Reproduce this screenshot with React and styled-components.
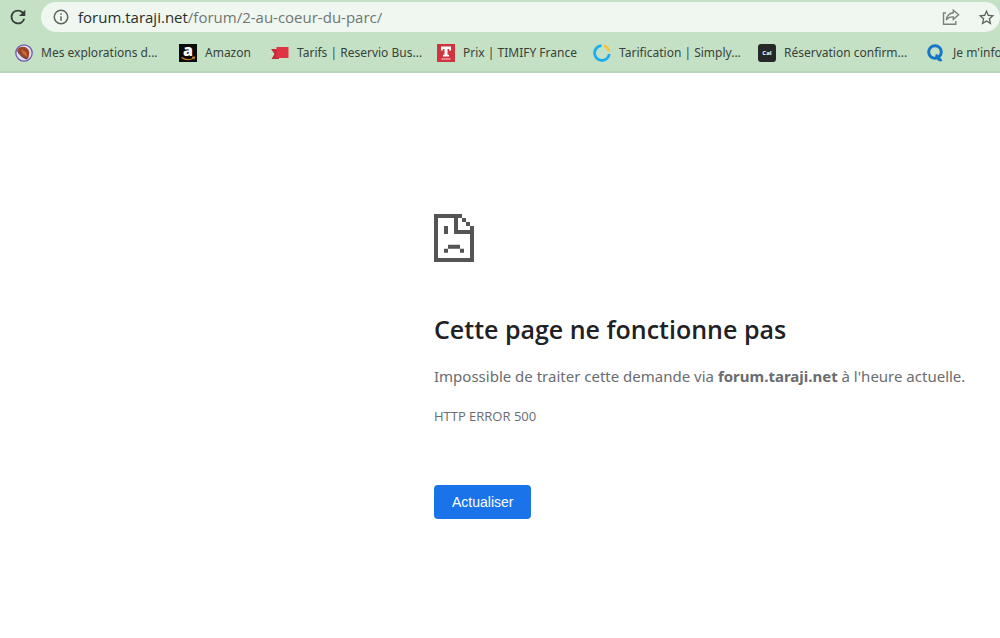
import React from "react";
import styled, { createGlobalStyle } from "styled-components";

const GlobalStyle = createGlobalStyle`
  * {
    box-sizing: border-box;
  }
  body {
    margin: 0;
    background-color: #ffffff;
    font-family: "Noto Sans", "Open Sans", sans-serif;
    overflow-x: hidden;
  }
`;

const Browser = styled.header`
  background-color: #c5e1c5;
  border-bottom: 2px solid #b9d3b9;
  overflow: hidden;
`;

const Toolbar = styled.div`
  display: flex;
  align-items: center;
  padding-top: 2px;
`;

const IconButton = styled.button`
  display: flex;
  align-items: center;
  justify-content: center;
  flex: none;
  width: ${(props) => props.$width}px;
  height: 30px;
  padding: 0;
  border: none;
  background: none;
  color: ${(props) => props.$color};
  cursor: pointer;
`;

const AddressBar = styled.div`
  flex: 1;
  display: flex;
  align-items: center;
  height: 30px;
  margin-left: 6px;
  padding-left: 4px;
  border-radius: 15px;
  background-color: #f0f7f0;
`;

const Url = styled.div`
  flex: 1;
  padding-left: 1px;
  font-family: "Open Sans", "Noto Sans", sans-serif;
  font-size: 15px;
  line-height: 30px;
  color: #6f7670;
  white-space: nowrap;
`;

const Host = styled.span`
  color: #26302a;
`;

const Bookmarks = styled.nav`
  display: flex;
  gap: 18px;
  height: 39px;
  padding: 2px 0 0 15px;
`;

const Bookmark = styled.a`
  flex: none;
  display: flex;
  align-items: center;
  gap: 8px;
  font-size: 12px;
  color: #37423a;
  text-decoration: none;
  white-space: nowrap;

  svg {
    flex: none;
  }
`;

const Label = styled.span`
  width: ${(props) => props.$width}px;
`;

const ErrorPage = styled.main`
  padding: 141px 0 0 434px;
  color: #6a6c70;
`;

const SadPage = styled.div`
  display: flex;
`;

const Title = styled.h1`
  margin: 49px 0 0;
  font-family: "Open Sans", "Noto Sans", sans-serif;
  font-size: 25px;
  font-weight: 600;
  line-height: 36px;
  color: #202124;
  white-space: nowrap;
`;

const Message = styled.p`
  margin: 16px 0 0;
  font-size: 15px;
  line-height: 26px;
  white-space: nowrap;
`;

const ErrorCode = styled.p`
  margin: 17px 0 0;
  font-family: "Open Sans", "Noto Sans", sans-serif;
  font-size: 13px;
  line-height: 20px;
`;

const Reload = styled.button`
  margin-top: 59px;
  height: 34px;
  padding: 0 18px;
  border: none;
  border-radius: 4px;
  background-color: #1a73e8;
  color: #ffffff;
  font-family: "Liberation Sans", Arial, sans-serif;
  font-size: 14px;
  cursor: pointer;
`;

const ReloadIcon = () => (
  <svg width="22" height="22" viewBox="0 0 24 24" fill="currentColor">
    <path d="M17.65 6.35A7.96 7.96 0 0 0 12 4a8 8 0 1 0 7.73 10h-2.08A6 6 0 1 1 12 6c1.66 0 3.14.69 4.22 1.78L13 11h7V4z" />
  </svg>
);

const InfoIcon = () => (
  <svg width="18" height="18" viewBox="0 0 24 24" fill="currentColor">
    <path d="M11 7h2v2h-2zm0 4h2v6h-2zm1-9a10 10 0 1 0 0 20 10 10 0 0 0 0-20zm0 18a8 8 0 1 1 0-16 8 8 0 0 1 0 16z" />
  </svg>
);

const ShareIcon = () => (
  <svg
    width="18"
    height="18"
    viewBox="0 0 18 18"
    fill="none"
    stroke="currentColor"
    strokeWidth="1.4"
  >
    <path d="M4 5H1.500v11.200h12.300V13" />
    <path d="M11.300 2.200L16.600 6.800l-5.300 4.600V8.900C8 8.700 5.800 9.800 4.300 12c.4-3.700 2.700-6.700 7-7.300z" />
  </svg>
);

const StarIcon = () => (
  <svg width="19" height="19" viewBox="0 0 24 24" fill="currentColor">
    <path d="M22 9.240l-7.190-.62L12 2 9.190 8.630 2 9.240l5.460 4.730L5.820 21 12 17.270 18.180 21l-1.630-7.030zM12 15.400l-3.760 2.270 1-4.280-3.320-2.880 4.380-.38L12 6.100l1.710 4.040 4.380.38-3.320 2.880 1 4.280z" />
  </svg>
);

const ExplorationsIcon = () => (
  <svg width="18" height="18" viewBox="0 0 18 18">
    <circle cx="9" cy="9" r="8.2" fill="#e3dcec" stroke="#6b5bb0" strokeWidth="1.3" />
    <path d="M2.500 5.500C4 2.800 7.500 2.200 10.500 3.300c2.500 1.200 4 3.700 3.700 6.200l-1 5.200C9.500 14.800 4.500 11.500 2.500 5.500z" fill="#9b4322" />
    <path d="M6 5l5 3 1.500 5C9 11.500 6.500 9 6 5z" fill="#c9692f" />
    <path d="M2.500 6.500c1.500 4 5 7.500 9.500 8.500" stroke="#4a2430" fill="none" />
  </svg>
);

const AmazonIcon = () => (
  <svg width="18" height="18" viewBox="0 0 18 18">
    <rect width="18" height="18" fill="#0b0b0b" />
    <text
      x="9"
      y="12"
      textAnchor="middle"
      fontFamily="Open Sans, sans-serif"
      fontSize="16"
      fontWeight="800"
      fill="#ffffff"
    >
      a
    </text>
    <path d="M2.500 13.500c4 2.700 8.500 2.700 12 .6M13 13.300l2.500-.2-.6 2.300" stroke="#d8892a" strokeWidth="1.1" fill="none" />
  </svg>
);

const ReservioIcon = () => (
  <svg width="18" height="18" viewBox="0 0 18 18">
    <path d="M0 5h8v10H0.500l3-5z" fill="#c42c3b" />
    <path d="M5.500 3H17.500v11H5.500z" fill="#e03445" />
  </svg>
);

const TimifyIcon = () => (
  <svg width="18" height="18" viewBox="0 0 18 18">
    <rect width="18" height="18" fill="#cf3440" />
    <path d="M4 2.500h10v4h-1.800V5h-1.700v5.700H12v1.800H6v-1.800h1.500V5H5.800v1.500H4z" fill="#ffffff" />
    <path d="M4.500 15h9" stroke="#f0b9bd" strokeWidth="1.5" strokeDasharray="1.5 .4" />
  </svg>
);

const SimplyIcon = () => (
  <svg width="18" height="18" viewBox="0 0 18 18" fill="none" strokeWidth="2.8">
    <path d="M8.500 1.700A7.400 7.400 0 1 0 16.300 10" stroke="#18aef0" />
    <path d="M10.800 1.900a7.400 7.400 0 0 1 5.400 5.500" stroke="#f8c440" />
  </svg>
);

const CalIcon = () => (
  <svg width="18" height="18" viewBox="0 0 18 18">
    <rect width="18" height="18" rx="3" fill="#272727" />
    <text
      x="9"
      y="11"
      textAnchor="middle"
      fontFamily="Open Sans, sans-serif"
      fontSize="6"
      fontWeight="700"
      fill="#ffffff"
    >
      Cal
    </text>
  </svg>
);

const QIcon = () => (
  <svg width="18" height="18" viewBox="0 0 18 18" fill="none" stroke="#1677c9" strokeWidth="3">
    <circle cx="8" cy="8" r="6.3" />
    <path d="M8.500 11.500c2 .3 3 2 3.200 3.700 1 .9 2 .8 3 .3" />
  </svg>
);

const SadPageIcon = () => (
  <svg width="40" height="48" viewBox="0 0 120 144" fill="#545454">
    <path d="M0 0H84V12H72V48H120V144H0zM12 12V132H108V60H60V12z" fillRule="evenodd" />
    <path d="M84 12h12v12H84zM96 24h12v12H96zM108 36h12v12h-12z" />
    <path d="M30 36h12v24H30z" />
    <path d="M42 92h36v12H42zM30 104h12v12H30zM78 104h12v12H78z" />
  </svg>
);

const bookmarks = [
  { label: "Mes explorations d...", width: 120, icon: <ExplorationsIcon /> },
  { label: "Amazon", width: 48, icon: <AmazonIcon /> },
  { label: "Tarifs | Reservio Bus...", width: 122, icon: <ReservioIcon /> },
  { label: "Prix | TIMIFY France", width: 112, icon: <TimifyIcon /> },
  { label: "Tarification | Simply...", width: 121, icon: <SimplyIcon /> },
  { label: "Réservation confirm...", width: 125, icon: <CalIcon /> },
  { label: "Je m'informe", width: 120, icon: <QIcon /> },
];

const App = () => {
  return (
    <>
      <GlobalStyle />
      <Browser>
        <Toolbar>
          <IconButton $width={35} $color="#333d36" aria-label="Actualiser la page">
            <ReloadIcon />
          </IconButton>
          <AddressBar>
            <IconButton $width={32} $color="#5c635e" aria-label="Informations du site">
              <InfoIcon />
            </IconButton>
            <Url>
              <Host>forum.taraji.net</Host>/forum/2-au-coeur-du-parc/
            </Url>
            <IconButton $width={42} $color="#7a807b" aria-label="Partager">
              <ShareIcon />
            </IconButton>
            <IconButton $width={28} $color="#5c635e" aria-label="Favori">
              <StarIcon />
            </IconButton>
          </AddressBar>
        </Toolbar>
        <Bookmarks>
          {bookmarks.map((item) => (
            <Bookmark href="#" key={item.label}>
              {item.icon}
              <Label $width={item.width}>{item.label}</Label>
            </Bookmark>
          ))}
        </Bookmarks>
      </Browser>
      <ErrorPage>
        <SadPage>
          <SadPageIcon />
        </SadPage>
        <Title>Cette page ne fonctionne pas</Title>
        <Message>
          Impossible de traiter cette demande via <b>forum.taraji.net</b> à
          l'heure actuelle.
        </Message>
        <ErrorCode>HTTP ERROR 500</ErrorCode>
        <Reload>Actualiser</Reload>
      </ErrorPage>
    </>
  );
};

export default App;
